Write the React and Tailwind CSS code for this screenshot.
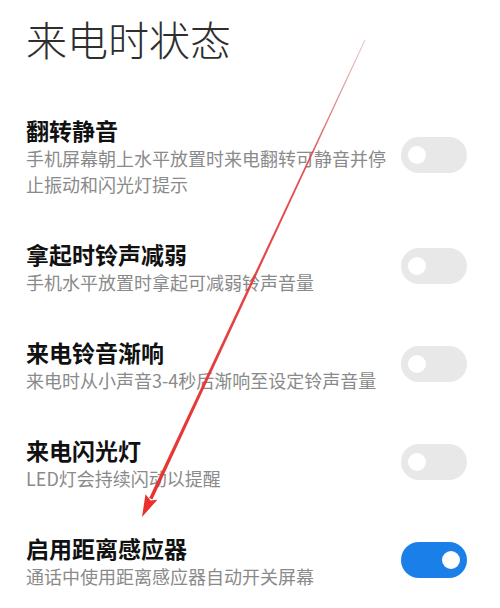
import { useState } from "react";

const rows = [
  {
    title: "翻转静音",
    desc: "手机屏幕朝上水平放置时来电翻转可静音并停止振动和闪光灯提示",
    on: false,
  },
  { title: "拿起时铃声减弱", desc: "手机水平放置时拿起可减弱铃声音量", on: false },
  { title: "来电铃音渐响", desc: "来电时从小声音3-4秒后渐响至设定铃声音量", on: false },
  { title: "来电闪光灯", desc: "LED灯会持续闪动以提醒", on: false },
  { title: "启用距离感应器", desc: "通话中使用距离感应器自动开关屏幕", on: true },
];

const Toggle = ({ on, onClick }) => (
  <button
    onClick={onClick}
    className={
      on
        ? "shrink-0 w-[66px] h-[36px] rounded-full bg-[#1a7fe9] flex items-center justify-end pr-[7px] mb-[3px]"
        : "shrink-0 w-[66px] h-[36px] rounded-full bg-[#e8e8e8] flex items-center justify-start pl-[7px] mb-[3px]"
    }
  >
    <span className="block w-[18px] h-[18px] rounded-full bg-white"></span>
  </button>
);

const App = () => {
  const [state, setState] = useState(rows.map((r) => r.on));

  function flip(i) {
    setState(state.map((v, j) => (j === i ? !v : v)));
  }

  return (
    <main
      className="relative w-[500px] h-[608px] bg-white overflow-hidden pl-[26px] pr-[33px] pt-[14px]"
      style={{ fontFamily: '"Noto Sans CJK SC", "Noto Sans", sans-serif' }}
    >
      <h1 className="text-[41px] leading-[48px] font-light text-[#2e2e2e]">来电时状态</h1>

      <div className="flex flex-col gap-[42px] mt-[53px]">
        {rows.map((row, i) => (
          <div key={row.title} className="flex items-center">
            <div className="w-[366px]">
              <p className="text-[23px] leading-[30px] font-bold text-[#111]">{row.title}</p>
              <p className="text-[18px] leading-[26px] text-[#8a8a8a]">{row.desc}</p>
            </div>
            <div className="ml-auto">
              <Toggle on={state[i]} onClick={() => flip(i)} />
            </div>
          </div>
        ))}
      </div>

      {/* red annotation arrow drawn over the screenshot */}
      <svg
        className="absolute inset-0 pointer-events-none"
        width="500"
        height="608"
        viewBox="0 0 500 608"
      >
        <defs>
          <linearGradient id="arrowfade" x1="365" y1="40" x2="142" y2="517" gradientUnits="userSpaceOnUse">
            <stop offset="0" stopColor="#c9868a" stopOpacity="0.5" />
            <stop offset="0.25" stopColor="#e0393c" stopOpacity="0.9" />
            <stop offset="1" stopColor="#e8312f" />
          </linearGradient>
        </defs>
        <polygon
          points="365.4,40.2 364.6,39.8 149.2,498.1 152.4,499.6"
          fill="url(#arrowfade)"
        />
        <polygon points="142,517 145.5,494.2 150.6,500.5 157.4,499.8" fill="#e8312f" />
      </svg>
    </main>
  );
};

export default App;
